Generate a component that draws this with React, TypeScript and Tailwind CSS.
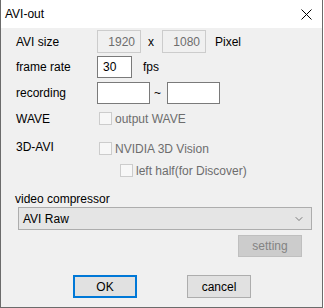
import { ChevronDown } from 'lucide-react';

function Checkbox() {
  return <span className="block w-[13px] h-[13px] border border-[#cccccc] bg-[#f7f7f7] shrink-0" />;
}

export default function App() {
  return (
    <div
      className="w-[323px] h-[308px] bg-[#f0f0f0] border-l border-r border-b border-[#6b6b6b] text-[12px] text-black relative"
      style={{ fontFamily: '"Liberation Sans", Arial, sans-serif' }}
    >
      {/* title bar */}
      <div className="h-[28px] bg-white flex items-center justify-between pl-[4px] pr-[9px]">
        <span className="leading-none">AVI-out</span>
        <svg width="11" height="11" viewBox="0 0 11 11" className="mr-[1px]">
          <path d="M0.5 0.5 L10.5 10.5 M10.5 0.5 L0.5 10.5" stroke="#000" strokeWidth="1" />
        </svg>
      </div>

      <div className="pl-[14px] pr-[12px]">
        {/* AVI size */}
        <div className="flex items-center mt-[2px] h-[23px]">
          <span className="w-[82px] pl-[1px]">AVI size</span>
          <div className="w-[44px] h-[23px] border border-[#cccccc] text-[#6d6d6d] flex items-center justify-end pr-[5px]">1920</div>
          <span className="w-[21px] pl-[7px]">x</span>
          <div className="w-[44px] h-[23px] border border-[#cccccc] text-[#6d6d6d] flex items-center justify-end pr-[5px]">1080</div>
          <span className="pl-[9px]">Pixel</span>
        </div>

        {/* frame rate */}
        <div className="flex items-center mt-[3px] h-[22px]">
          <span className="w-[82px] pl-[1px]">frame rate</span>
          <div className="w-[35px] h-[22px] border border-[#7a7a7a] bg-white flex items-center pl-[5px]">30</div>
          <span className="pl-[11px]">fps</span>
        </div>

        {/* recording */}
        <div className="flex items-center mt-[4px] h-[22px]">
          <span className="w-[82px] pl-[1px]">recording</span>
          <div className="w-[53px] h-[22px] border border-[#7a7a7a] bg-white" />
          <span className="w-[17px] pl-[4px]">~</span>
          <div className="w-[53px] h-[22px] border border-[#7a7a7a] bg-white" />
        </div>

        {/* WAVE */}
        <div className="flex items-center mt-[8px] h-[13px]">
          <span className="w-[84px] pl-[1px]">WAVE</span>
          <Checkbox />
          <span className="pl-[3px] text-[#6d6d6d]">output WAVE</span>
        </div>

        {/* 3D-AVI */}
        <div className="flex items-center mt-[17px] h-[13px]">
          <span className="w-[84px] pl-[1px] -mt-[3px]">3D-AVI</span>
          <Checkbox />
          <span className="pl-[3px] text-[#6d6d6d]">NVIDIA 3D Vision</span>
        </div>
        <div className="flex items-center mt-[9px] h-[13px] pl-[105px]">
          <Checkbox />
          <span className="pl-[3px] text-[#6d6d6d]">left half(for Discover)</span>
        </div>

        {/* video compressor */}
        <div className="mt-[15px] leading-[14px]">video compressor</div>
        <div className="mt-[1px] ml-[3px] w-[294px] h-[23px] border border-[#adadad] bg-[#e5e5e5] flex items-center justify-between pl-[4px] pr-[6px]">
          <span>AVI Raw</span>
          <ChevronDown size={12} strokeWidth={1.2} color="#333" />
        </div>
        <div className="flex justify-end mt-[5px] pr-[8px]">
          <div className="w-[64px] h-[22px] bg-[#cccccc] border border-[#bfbfbf] text-[#838383] flex items-center justify-center">setting</div>
        </div>

        {/* buttons */}
        <div className="flex mt-[18px] pl-[58px] gap-[50px]">
          <div className="w-[64px] h-[23px] bg-[#e1e1e1] border-2 border-[#0078d7] flex items-center justify-center">OK</div>
          <div className="w-[64px] h-[23px] bg-[#e1e1e1] border border-[#adadad] flex items-center justify-center">cancel</div>
        </div>
      </div>
    </div>
  );
}
